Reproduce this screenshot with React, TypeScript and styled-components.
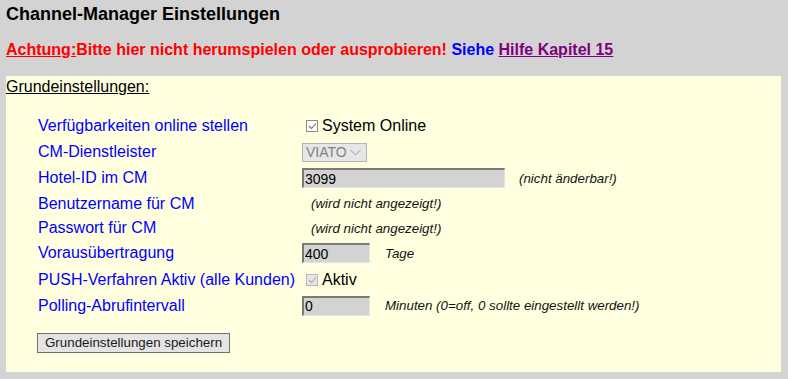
import { FC } from "react";
import styled, { createGlobalStyle } from "styled-components";

const GlobalStyle = createGlobalStyle`
  body {
    margin: 0;
    background-color: #d3d3d3;
    font-family: "Liberation Sans", Arial, sans-serif;
  }
`;

const Page = styled.div`
  display: flex;
  flex-direction: column;
  padding: 4px 7px 8px 6px;
`;

const Title = styled.div`
  font-size: 18px;
  font-weight: bold;
  line-height: 21px;
  color: #000000;
`;

const Warning = styled.div`
  margin-top: 16px;
  font-size: 16px;
  font-weight: bold;
  line-height: 18px;
  color: #ff0000;
`;

const Underlined = styled.span`
  text-decoration: underline;
`;

const Blue = styled.span`
  color: #0000ff;
`;

const HelpLink = styled.a`
  color: #800080;
  text-decoration: underline;
  cursor: pointer;
`;

const Panel = styled.div`
  margin-top: 17px;
  background-color: #ffffe0;
  padding: 2px 0 19px 0;
`;

const PanelHeading = styled.div`
  font-size: 16px;
  line-height: 18px;
  color: #000000;
  text-decoration: underline;
`;

const Form = styled.div`
  display: flex;
  flex-direction: column;
  margin: 17px 0 0 32px;
`;

const Row = styled.div<{ h: number }>`
  display: grid;
  grid-template-columns: 264px 1fr;
  align-items: center;
  height: ${(props) => props.h + "px"};
`;

const Label = styled.span`
  font-size: 16px;
  color: #0000ff;
  white-space: nowrap;
`;

const Cell = styled.div`
  display: flex;
  flex-direction: row;
  align-items: center;
`;

const Box = styled.span<{ disabled?: boolean }>`
  display: inline-flex;
  align-items: center;
  justify-content: center;
  box-sizing: border-box;
  width: 12px;
  height: 12px;
  margin: 0 4px 0 4px;
  border: 1px solid ${(props) => (props.disabled ? "#b8b8b8" : "#8a8a8a")};
  background-color: ${(props) => (props.disabled ? "#e6e6e6" : "#ffffff")};
`;

const CheckText = styled.span`
  font-size: 16px;
  color: #000000;
`;

const Select = styled.div`
  display: flex;
  flex-direction: row;
  align-items: center;
  justify-content: space-between;
  box-sizing: border-box;
  width: 65px;
  height: 19px;
  padding: 0 5px 0 3px;
  border: 1px solid #b4b4b4;
  background-color: #e6e6e6;
  color: #808080;
  font-size: 14px;
`;

const Input = styled.div<{ w: number }>`
  display: flex;
  align-items: center;
  box-sizing: border-box;
  width: ${(props) => props.w + "px"};
  height: 20px;
  padding-left: 1px;
  border-style: solid;
  border-width: 2px 1px 1px 2px;
  border-color: #7a7a7a #e4e4e4 #e4e4e4 #7a7a7a;
  background-color: #d3d3d3;
  color: #000000;
  font-size: 14px;
`;

const Note = styled.span<{ gap: number }>`
  margin-left: ${(props) => props.gap + "px"};
  font-size: 13.33px;
  font-style: italic;
  color: #141414;
  white-space: nowrap;
`;

const SaveButton = styled.button`
  align-self: flex-start;
  margin-top: 15px;
  margin-left: -1px;
  height: 20px;
  padding: 0 7px;
  border: 1px solid #707070;
  background-color: #e4e4e4;
  color: #1a1a1a;
  font-family: "Liberation Sans", Arial, sans-serif;
  font-size: 13.33px;
  line-height: 16px;
`;

const Check: FC<{ color: string }> = ({ color }) => (
  <svg width="9" height="8" viewBox="0 0 9 8">
    <polyline points="1,4 3.5,6.5 8,1.5" fill="none" stroke={color} strokeWidth="1.1" />
  </svg>
);

const Chevron: FC = () => (
  <svg width="11" height="7" viewBox="0 0 11 7">
    <polyline points="0.5,1 5.5,6 10.5,1" fill="none" stroke="#9a9a9a" strokeWidth="1" />
  </svg>
);

const App: FC = () => {
  return (
    <>
      <GlobalStyle />
      <Page>
        <Title>Channel-Manager Einstellungen</Title>
        <Warning>
          <Underlined>Achtung:</Underlined>Bitte hier nicht herumspielen oder ausprobieren!{" "}
          <Blue>Siehe</Blue> <HelpLink>Hilfe Kapitel 15</HelpLink>
        </Warning>
        <Panel>
          <PanelHeading>Grundeinstellungen:</PanelHeading>
          <Form>
            <Row h={26}>
              <Label>Verfügbarkeiten online stellen</Label>
              <Cell>
                <Box>
                  <Check color="#6e6e6e" />
                </Box>
                <CheckText>System Online</CheckText>
              </Cell>
            </Row>
            <Row h={26}>
              <Label>CM-Dienstleister</Label>
              <Cell>
                <Select>
                  VIATO
                  <Chevron />
                </Select>
              </Cell>
            </Row>
            <Row h={26}>
              <Label>Hotel-ID im CM</Label>
              <Cell>
                <Input w={203}>3099</Input>
                <Note gap={14}>(nicht änderbar!)</Note>
              </Cell>
            </Row>
            <Row h={25}>
              <Label>Benutzername für CM</Label>
              <Cell>
                <Note gap={9}>(wird nicht angezeigt!)</Note>
              </Cell>
            </Row>
            <Row h={24}>
              <Label>Passwort für CM</Label>
              <Cell>
                <Note gap={9}>(wird nicht angezeigt!)</Note>
              </Cell>
            </Row>
            <Row h={26}>
              <Label>Vorausübertragung</Label>
              <Cell>
                <Input w={68}>400</Input>
                <Note gap={15}>Tage</Note>
              </Cell>
            </Row>
            <Row h={27}>
              <Label>PUSH-Verfahren Aktiv (alle Kunden)</Label>
              <Cell>
                <Box disabled>
                  <Check color="#a8a8a8" />
                </Box>
                <CheckText>Aktiv</CheckText>
              </Cell>
            </Row>
            <Row h={25}>
              <Label>Polling-Abrufintervall</Label>
              <Cell>
                <Input w={68}>0</Input>
                <Note gap={15}>Minuten (0=off, 0 sollte eingestellt werden!)</Note>
              </Cell>
            </Row>
            <SaveButton>Grundeinstellungen speichern</SaveButton>
          </Form>
        </Panel>
      </Page>
    </>
  );
};

export default App;
